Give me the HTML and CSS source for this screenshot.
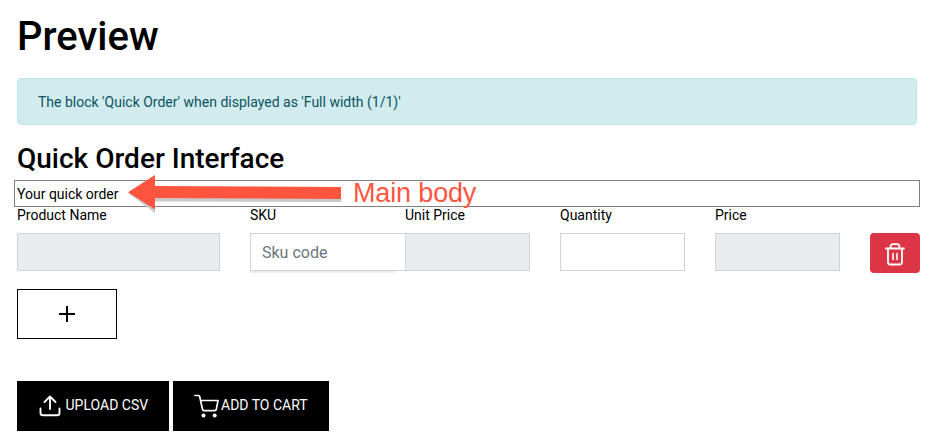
FILE: index.html
```html
<!DOCTYPE html>
<html lang="en">
<head>
<meta charset="utf-8">
<title>Preview</title>
<link rel="stylesheet" href="styles.css">
</head>
<body>
<main class="page">
  <h1 class="title">Preview</h1>
  <div class="alert">The block 'Quick Order' when displayed as 'Full width (1/1)'</div>
  <h2 class="subtitle">Quick Order Interface</h2>
  <div class="intro">
    <span>Your quick order</span>
    <div class="callout">
      <svg class="arrow" width="220" height="38" viewBox="0 0 220 38" aria-hidden="true">
        <path d="M0 18 26 12 213 14V27L27 26.500V38Z" fill="#c9c9c9"/>
        <path d="M0 17.200 27 0V11L213 12V24L27 23V34.500Z" fill="#ff553e"/>
      </svg>
      <span class="callout-text">Main body</span>
    </div>
  </div>
  <div class="order">
    <div class="field"><label>Product Name</label><input class="control" disabled></div>
    <div class="field"><label>SKU</label><div class="sku"><input class="control" placeholder="Sku code"></div></div>
    <div class="field"><label>Unit Price</label><input class="control" disabled></div>
    <div class="field"><label>Quantity</label><input class="control"></div>
    <div class="field"><label>Price</label><input class="control" disabled></div>
    <button class="delete" aria-label="Delete">
      <svg width="20" height="23" viewBox="0 0 20 23" fill="none" stroke="#fff" stroke-width="1.800" stroke-linecap="round" stroke-linejoin="round">
        <path d="M1 5.500H19M3 5.500V19Q3 21.500 5.500 21.500H14.500Q17 21.500 17 19V5.500M5.500 5V4Q5.500 1.200 8 1.200H12Q14.500 1.200 14.500 4V5"/>
        <path d="M8 10.500V16.500M12 10.500V16.500" stroke-width="1.600"/>
      </svg>
    </button>
  </div>
  <button class="add" aria-label="Add row">
    <svg width="16" height="16" viewBox="0 0 16 16" stroke="#000" stroke-width="2"><path d="M0 8H16M8 0V16"/></svg>
  </button>
  <div class="actions">
    <button class="action upload">
      <svg width="22" height="22" viewBox="0 0 22 22" fill="none" stroke="#fff" stroke-width="1.900" stroke-linecap="round" stroke-linejoin="round">
        <path d="M11 14V1.500M5.500 7 11 1.500 16.500 7M1.500 13.500V18Q1.500 20.300 4 20.300H18Q20.500 20.300 20.500 18V13.500"/>
      </svg>
      <span>UPLOAD CSV</span>
    </button>
    <button class="action cart">
      <svg width="25" height="24" viewBox="0 0 25 24" fill="none" stroke="#fff" stroke-width="1.700" stroke-linecap="round" stroke-linejoin="round">
        <path d="M1 1.500H4.500Q5.500 1.500 5.700 2.500L8.300 14.500Q8.700 16.700 10.500 16.700H20.500Q22 16.700 22.400 15L24 6.500H6.600"/>
        <circle cx="9.500" cy="21.500" r="2" fill="#fff" stroke="none"/><circle cx="20.700" cy="21.500" r="2" fill="#fff" stroke="none"/>
      </svg>
      <span>ADD TO CART</span>
    </button>
  </div>
</main>
</body>
</html>
```
FILE: styles.css
```css
* { box-sizing: border-box; }
body { margin: 0; background: #fff; color: #000; font: 14px/21px Roboto, sans-serif; }
.page { height: 448px; padding: 13px 15px 0 17px; overflow: hidden; }
.title { margin: 0 0 17px; font-size: 40px; line-height: 48px; font-weight: 500; }
.alert { width: 900px; height: 47px; padding: 13px 20px 11px; border: 1px solid #bee5eb; border-radius: 4px; background: #d1ebef; color: #0c5460; }
.subtitle { margin: 17px 0 4px; font-size: 28px; line-height: 34px; font-weight: 500; }
.intro { position: relative; width: 906px; height: 27px; margin-left: -3px; padding: 3px 2px 1px; border: 1px solid #808080; }
.callout { position: absolute; left: 113px; top: -6px; display: flex; }
.arrow { flex: none; }
.callout-text { margin: 3px 0 0 5px; color: #ff553e; font: 27px/30px "Liberation Sans", sans-serif; letter-spacing: -0.150px; white-space: nowrap; }
.order { display: grid; grid-template-columns: 203px 125px 125px 125px 125px 50px; column-gap: 30px; margin-top: -2px; }
.field { min-width: 0; }
.field label { display: block; height: 28px; }
.control { display: block; width: 100%; height: 38px; margin: 0; padding: 0 12px; border: 1px solid #ced4da; border-radius: 0; background: #fff; font: 16px/24px Roboto, sans-serif; }
.control:disabled { background: #e9ecef; }
.control::placeholder { color: #6c757d; opacity: 1; }
.sku { position: relative; z-index: 1; width: 145px; height: 40px; background: #ededed; }
.sku .control { width: 156px; padding-left: 11px; }
.delete { display: flex; align-items: center; justify-content: center; width: 50px; height: 40px; margin-top: 28px; padding: 2px 0 0; border: 0; border-radius: 4px; background: #dc3545; }
.add { display: flex; align-items: center; justify-content: center; width: 100px; height: 50px; margin: 16px 0 42px; padding: 0; border: 1px solid #000; background: #fff; }
.actions { display: flex; gap: 4px; }
.action { display: flex; align-items: center; height: 50px; padding: 0; border: 0; background: #000; color: #fff; font: 14px/21px Roboto, sans-serif; white-space: nowrap; }
.upload { width: 152px; padding-left: 22px; gap: 4.500px; }
.cart { width: 156px; padding-left: 21px; gap: 2px; }
.action span { padding-bottom: 1px; }
```
